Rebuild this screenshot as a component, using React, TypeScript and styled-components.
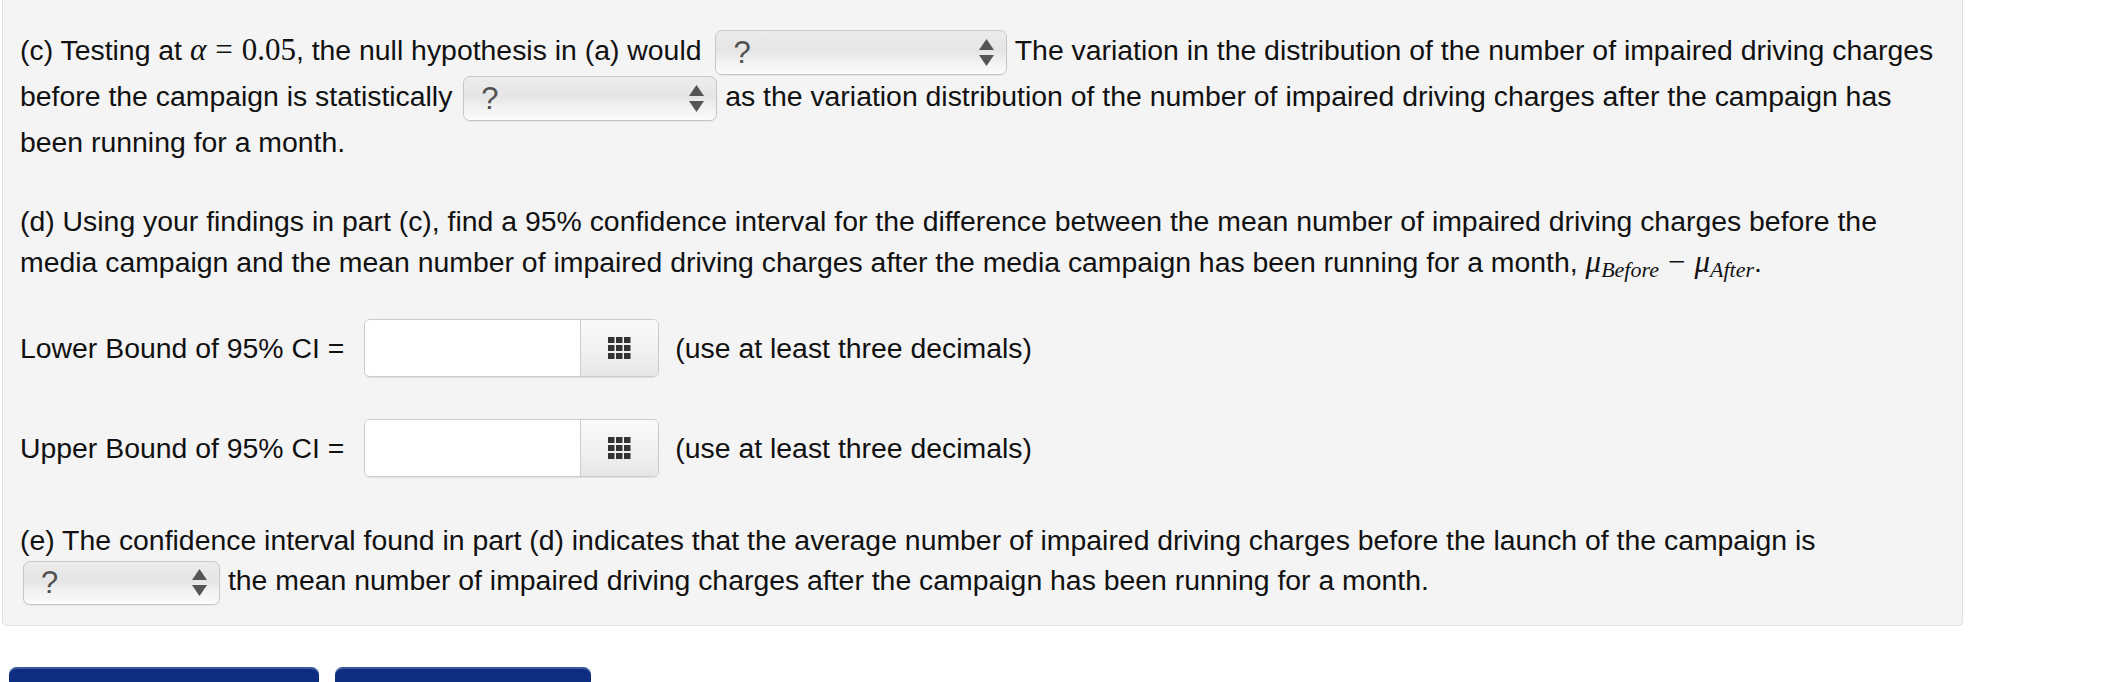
import React from "react";
import styled, { createGlobalStyle } from "styled-components";

const GlobalStyle = createGlobalStyle`
  html, body {
    margin: 0;
    padding: 0;
    background: #ffffff;
  }
  body {
    font-family: "Liberation Sans", Arial, Helvetica, sans-serif;
    color: #111;
  }
`;

const Page = styled.div`
  width: 2106px;
  height: 682px;
  overflow: hidden;
  padding-left: 2px;
  box-sizing: border-box;
`;

const Panel = styled.div`
  width: 1961px;
  box-sizing: border-box;
  background: #f4f4f4;
  border: 1px solid #dfdfdf;
  border-top: none;
  border-radius: 0 0 5px 5px;
  padding: 27px 16px 25px 17px;
  font-size: 28.4px;
`;

const Para = styled.p<{ $lh: number; $top?: number }>`
  margin: ${(p) => p.$top ?? 0}px 0 0 0;
  line-height: ${(p) => p.$lh}px;
`;

const Math = styled.span`
  font-family: "Liberation Serif", "Times New Roman", serif;
  font-size: 31px;
`;

const MathVar = styled.i`
  font-family: "Liberation Serif", "Times New Roman", serif;
  font-style: italic;
`;

const MathOp = styled.span`
  margin: 0 9px;
`;

const Sub = styled.sub`
  font-family: "Liberation Serif", "Times New Roman", serif;
  font-style: italic;
  font-size: 22px;
  vertical-align: -5px;
  line-height: 0;
`;

const SelectBox = styled.span<{ $w: number; $h: number; $ml: number }>`
  display: inline-flex;
  align-items: center;
  justify-content: space-between;
  vertical-align: middle;
  box-sizing: border-box;
  width: ${(p) => p.$w}px;
  height: ${(p) => p.$h}px;
  margin: -6px 0 -6px ${(p) => p.$ml}px;
  padding: 0 12px 0 17px;
  border: 1px solid #c6c6c6;
  border-radius: 7px;
  background: linear-gradient(
    to bottom,
    #ececec 0%,
    #e5e5e5 45%,
    #f1f1f1 70%,
    #fbfbfb 100%
  );
  box-shadow: inset 0 -1px 1px rgba(255, 255, 255, 0.9), 0 1px 1px rgba(0, 0, 0, 0.06);
  color: #505050;
  font-size: 31px;
  line-height: 1;
`;

const Arrows = styled.svg`
  width: 15px;
  height: 28px;
  flex-shrink: 0;
`;

const Select = ({ w, h = 44, ml = 3 }: { w: number; h?: number; ml?: number }) => (
  <SelectBox $w={w} $h={h} $ml={ml}>
    <span>?</span>
    <Arrows viewBox="0 0 15 28">
      <polygon points="7.5,0 15,11 0,11" fill="#555" />
      <polygon points="0,16 15,16 7.5,27" fill="#555" />
    </Arrows>
  </SelectBox>
);

const BoundRow = styled.div<{ $top: number }>`
  display: flex;
  align-items: center;
  margin-top: ${(p) => p.$top}px;
  line-height: 40px;
`;

const Label = styled.span`
  margin-right: 20px;
`;

const InputGroup = styled.div`
  display: flex;
  height: 58px;
  box-sizing: border-box;
  border: 1px solid #cbcbcb;
  border-radius: 6px;
  background: #ffffff;
  box-shadow: 0 1px 1px rgba(0, 0, 0, 0.08);
  overflow: hidden;
  margin-right: 16px;
`;

const Field = styled.div`
  width: 215px;
  background: #ffffff;
`;

const Addon = styled.div`
  width: 77px;
  display: flex;
  align-items: center;
  justify-content: center;
  border-left: 1px solid #cbcbcb;
  background: linear-gradient(to bottom, #fafafa 0%, #f0f0f0 60%, #e6e6e6 100%);
`;

const GridIcon = () => (
  <svg width="23" height="22" viewBox="0 0 23 22">
    {[0, 1, 2].map((r) =>
      [0, 1, 2].map((c) => (
        <rect key={`${r}-${c}`} x={c * 8} y={r * 8} width="6.5" height="6" fill="#333" />
      ))
    )}
  </svg>
);

const Hint = styled.span``;

const ButtonRow = styled.div`
  display: flex;
  gap: 16px;
  margin-top: 41px;
  padding-left: 7px;
`;

const NavButton = styled.div<{ $w: number }>`
  width: ${(p) => p.$w}px;
  height: 50px;
  border-radius: 8px 8px 0 0;
  background: linear-gradient(to bottom, #0a2672 0%, #0d2e80 8%, #123586 100%);
  box-shadow: inset 0 3px 0 -1px rgba(120, 150, 210, 0.45);
`;

export default function App() {
  return (
    <>
      <GlobalStyle />
      <Page>
        <Panel>
          <Para $lh={46}>
            (c) Testing at{" "}
            <Math>
              <MathVar>α</MathVar>
              <MathOp>=</MathOp>0.05
            </Math>
            , the null hypothesis in (a) would <Select w={292} h={45} ml={6} /> The variation in
            the distribution of the number of impaired driving charges before the campaign is
            statistically <Select w={254} h={45} /> as the variation distribution of the number of
            impaired driving charges after the campaign has been running for a month.
          </Para>

          <Para $lh={40.5} $top={36}>
            (d) Using your findings in part (c), find a 95% confidence interval for the difference
            between the mean number of impaired driving charges before the media campaign and the
            mean number of impaired driving charges after the media campaign has been running for
            a month,{" "}
            <Math>
              <MathVar>μ</MathVar>
              <Sub>Before</Sub>
              <MathOp>−</MathOp>
              <MathVar>μ</MathVar>
              <Sub>After</Sub>
            </Math>
            .
          </Para>

          <BoundRow $top={37}>
            <Label>Lower Bound of 95% CI =</Label>
            <InputGroup>
              <Field />
              <Addon>
                <GridIcon />
              </Addon>
            </InputGroup>
            <Hint>(use at least three decimals)</Hint>
          </BoundRow>

          <BoundRow $top={42}>
            <Label>Upper Bound of 95% CI =</Label>
            <InputGroup>
              <Field />
              <Addon>
                <GridIcon />
              </Addon>
            </InputGroup>
            <Hint>(use at least three decimals)</Hint>
          </BoundRow>

          <Para $lh={40} $top={43}>
            (e) The confidence interval found in part (d) indicates that the average number of
            impaired driving charges before the launch of the campaign is <Select w={197} /> the mean
            number of impaired driving charges after the campaign has been running for a month.
          </Para>
        </Panel>
        <ButtonRow>
          <NavButton $w={310} />
          <NavButton $w={256} />
        </ButtonRow>
      </Page>
    </>
  );
}
